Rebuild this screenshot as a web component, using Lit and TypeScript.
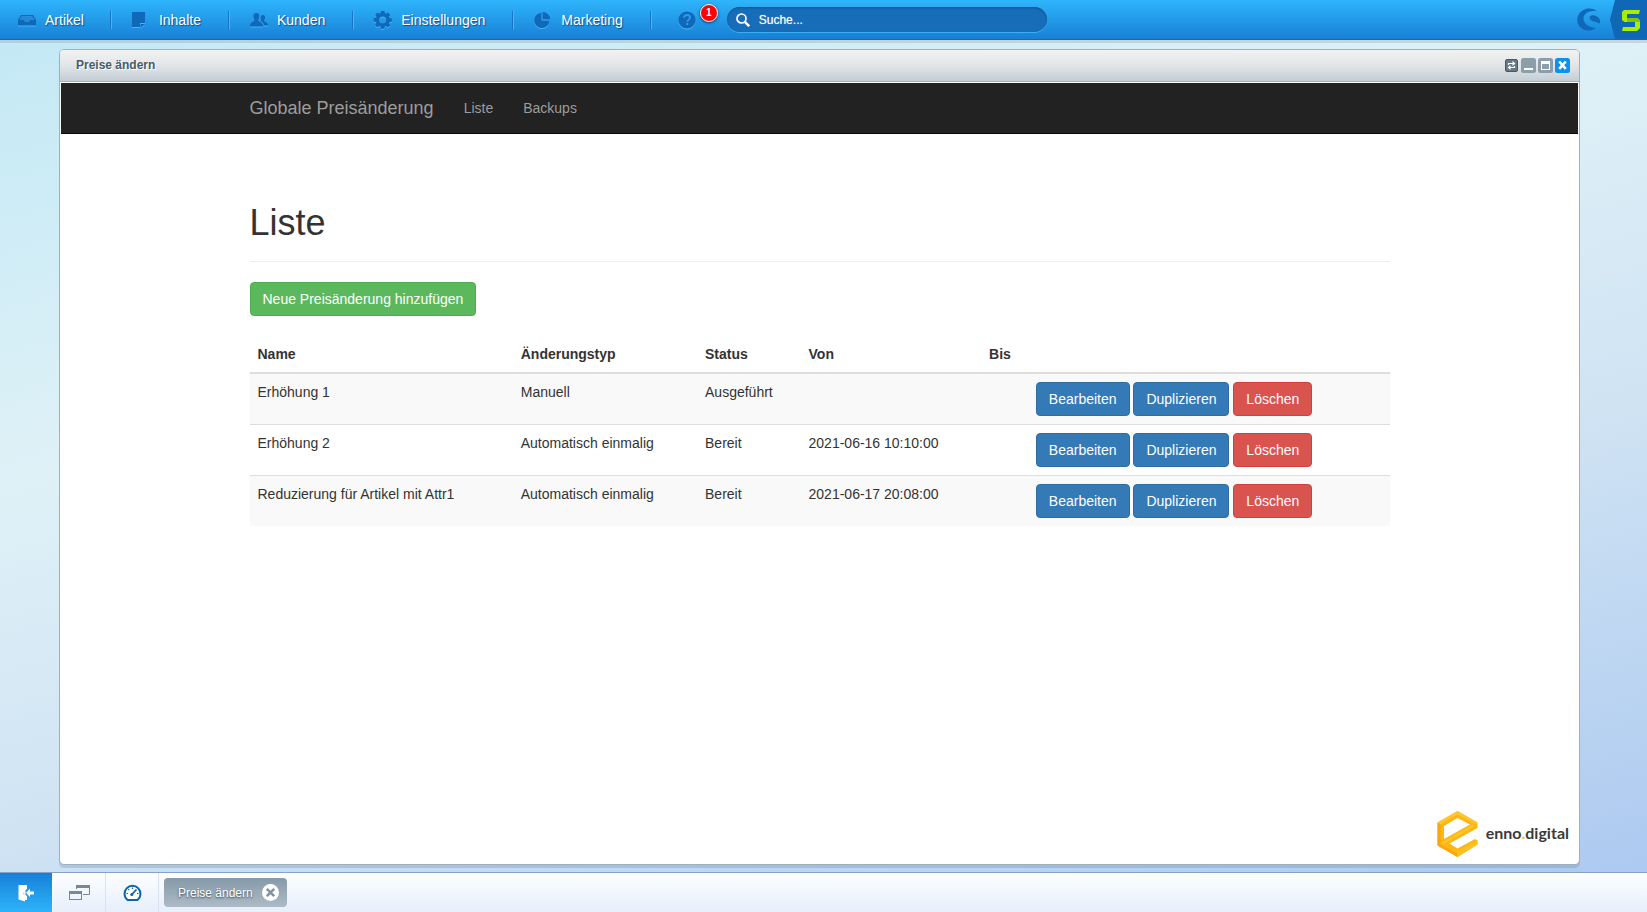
import { LitElement, html, css, svg } from "lit";
import { customElement } from "lit/decorators.js";

const navIcons = {
  artikel: svg`<path fill-rule="evenodd" d="M3 1H15L18 6V11.5H0V6ZM3.8 2.4L1.8 6H5.6L7 8H11L12.4 6H16.2L14.2 2.4Z"/><path d="M3.800 3H14.200L16 6H12.400L11 8H7L5.600 6H2Z" opacity=".45"/>`,
  inhalte: svg`<path d="M0 0H13V11H8V15H0ZM9 12H13L9 15.5Z"/>`,
  kunden: svg`<path d="M6.300 0C8.600 0 9.500 1.500 9.300 3.800C9.200 5.500 8.300 6.600 8.300 7.600C8.300 8.900 12.800 9.200 12.800 12.400V13.500H0V12.400C0 9.200 4.400 8.900 4.400 7.600C4.400 6.600 3.500 5.500 3.400 3.800C3.200 1.500 4.100 0 6.300 0ZM12.800 2C14.600 2 15.300 3.300 15.100 5C15 6.400 14.300 7.100 14.300 8C14.300 9 18 9.300 18 11.700V12.500H13.900C13.700 10.400 12.400 9.300 10.700 8.600C11.500 8 11 7 10.800 6C10.600 3.500 11 2 12.800 2Z"/>`,
  einstellungen: svg`<path fill-rule="evenodd" d="M7 0H10.400L10.900 2.300L12 2.800L14 1.500L16.300 3.900L15 5.900L15.400 7L17.800 7.500V10.700L15.400 11.200L14.900 12.200L16.200 14.200L13.900 16.400L11.900 15.100L10.900 15.500L10.300 17.800H7L6.500 15.500L5.400 15.100L3.400 16.300L1.100 14L2.400 12L2 11L-.3 10.500V7.200L2 6.700L2.500 5.700L1.200 3.700L3.500 1.400L5.500 2.700L6.500 2.300ZM8.700 5.400A3.500 3.500 0 1 0 8.700 12.400A3.500 3.500 0 1 0 8.700 5.400Z"/>`,
  marketing: svg`<path d="M7.400 .8V8.800H15.400A7.600 7.600 0 1 1 7.400 .8ZM8.600 0A7.500 7.500 0 0 1 16.200 7.600H8.600Z"/>`,
};

const navEntries = [
  { label: "Artikel", icon: navIcons.artikel, height: 12 },
  { label: "Inhalte", icon: navIcons.inhalte, height: 16 },
  { label: "Kunden", icon: navIcons.kunden, height: 14 },
  { label: "Einstellungen", icon: navIcons.einstellungen, height: 18 },
  { label: "Marketing", icon: navIcons.marketing, height: 16 },
];

const rows = [
  { name: "Erhöhung 1", type: "Manuell", status: "Ausgeführt", from: "", to: "" },
  { name: "Erhöhung 2", type: "Automatisch einmalig", status: "Bereit", from: "2021-06-16 10:10:00", to: "" },
  { name: "Reduzierung für Artikel mit Attr1", type: "Automatisch einmalig", status: "Bereit", from: "2021-06-17 20:08:00", to: "" },
];

@customElement("main-menu")
class MainMenu extends LitElement {
  static styles = css`
    :host {
      display: flex;
      align-items: stretch;
      height: 39px;
      border-bottom: 1px solid #0f6cbb;
      background: linear-gradient(#2fb5fb, #1780d6);
      box-shadow: 0 3px 0 rgba(120, 140, 150, 0.25);
      position: relative;
      font: 14px/20px "Liberation Sans", Arial, sans-serif;
      color: #fff;
    }
    svg { display: block; }
    .nav { display: flex; align-items: center; }
    .entry {
      display: flex;
      align-items: center;
      gap: 9px;
      padding: 0 27px 0 20px;
      color: #fff;
      text-decoration: none;
      text-shadow: 1px 1px 1px #0b4f8f;
    }
    .entry:first-child { padding: 0 26px 0 18px; }
    .glyph {
      width: 18px;
      overflow: visible;
      fill: #0f68b8;
      filter: drop-shadow(0 1px 0 #45b4f7);
    }
    .divider {
      width: 1px;
      height: 18px;
      background: #1874c4;
      border-right: 1px solid #4ab4f3;
    }
    .help {
      position: relative;
      margin: 0 31px 0 26px;
      padding: 0;
      border: 0;
      background: none;
      align-self: center;
    }
    .badge {
      position: absolute;
      left: 22px;
      top: -7px;
      box-sizing: border-box;
      width: 18px;
      height: 18px;
      border: 1px solid #fff;
      border-radius: 9px;
      background: #f00;
      box-shadow: 0 1px 3px #0a3c70;
      color: #fff;
      font: bold 10px/16px "Liberation Sans", Arial, sans-serif;
      text-align: center;
    }
    .search {
      box-sizing: border-box;
      display: flex;
      align-items: center;
      gap: 9px;
      width: 320px;
      height: 25px;
      margin-top: 7px;
      padding: 0 16px 0 9px;
      border-radius: 13px;
      background: #186db8;
      box-shadow: inset 0 1px 2px #0d5292, 0 1px 0 #3cacf4;
    }
    .query {
      flex: 1;
      min-width: 0;
      padding: 0;
      border: 0;
      outline: 0;
      background: none;
      color: #fff;
      font: 12px/20px "Liberation Sans", Arial, sans-serif;
      text-shadow: 0 0 1px rgba(255, 255, 255, 0.5);
    }
    .query::placeholder { color: #fff; opacity: 1; }
    .brand { display: flex; align-items: center; margin-left: auto; }
    .swirl { margin-right: 10px; overflow: visible; }
  `;

  render() {
    return html`
      <nav class="nav">
        ${navEntries.map(
          (entry) => html`
            <a class="entry" href="#">
              <svg class="glyph" height=${entry.height} viewBox="0 0 18 ${entry.height}" aria-hidden="true">${entry.icon}</svg>
              ${entry.label}
            </a>
            <span class="divider"></span>
          `
        )}
      </nav>
      <button class="help" aria-label="Hilfe">
        <svg class="glyph" height="18" viewBox="0 0 18 18" aria-hidden="true">
          <circle cx="9" cy="9" r="8.600" />
          <path d="M6 6.800C6.100 4.900 7.400 4 9.100 4C10.900 4 12.100 5 12.100 6.500C12.100 8.600 9.200 8.700 9.200 10.800" fill="none" stroke="#2b9be9" stroke-width="1.900" />
          <rect x="8.200" y="12" width="2" height="2" fill="#2b9be9" />
        </svg>
        <span class="badge">1</span>
      </button>
      <label class="search">
        <svg width="14" height="14" viewBox="0 0 14 14" fill="none" stroke="#fff" aria-hidden="true">
          <circle cx="5.500" cy="5.500" r="4.500" stroke-width="1.700" />
          <path d="M8.800 8.800L13.200 13.200" stroke-width="2.400" />
        </svg>
        <input class="query" type="text" placeholder="Suche..." aria-label="Suche" />
      </label>
      <div class="brand">
        <svg class="swirl" width="23" height="23" viewBox="0 0 23 23" aria-hidden="true">
          <path d="M20 3.200C17 .6 13 -.2 9.500 .8C3.800 2.300 .2 6.800 .3 12C.4 18.300 5.300 22.500 11.300 22.600C14.300 22.600 17.500 21.500 19 20C13 19.600 6.400 16.200 6.500 10.200C6.600 5.200 12.500 1.800 20 3.200Z" fill="#0f68b8" />
          <path d="M12.500 9.500C13 6.500 17.500 6.500 20.500 8.700C23 10.500 23.700 13 22.700 15.600C20 13.500 12 13.500 12.500 9.500Z" fill="#0f68b8" />
        </svg>
        <svg width="37" height="39" viewBox="0 0 37 39" aria-hidden="true">
          <path d="M5 0H37V39H5L0 19.500Z" fill="#0f67b6" />
          <path d="M14 10H30L29 14H17V18H27.500L30 20.500V28L27 31H12L13 27H25V22H14.500L12 20V12Z" fill="#a8ee00" />
          <path d="M17 18H27.500L30 20.500V22L25 22H17Z" fill="#82c400" />
        </svg>
      </div>
    `;
  }
}

@customElement("price-list")
class PriceList extends LitElement {
  static styles = css`
    :host {
      display: block;
      font: 14px/20px "Liberation Sans", Arial, sans-serif;
      color: #333;
    }
    .navbar { background: #222; border-bottom: 1px solid #080808; }
    .container {
      box-sizing: border-box;
      max-width: 1170px;
      margin: 0 auto;
      padding: 0 15px;
    }
    .links { display: flex; align-items: center; height: 50px; gap: 30px; }
    .brand { font-size: 18px; }
    .brand, .link { color: #9d9d9d; text-decoration: none; }
    .heading {
      margin: 69px 0 20px;
      padding-bottom: 18px;
      border-bottom: 1px solid #eee;
      font-weight: 500;
      font-size: 36px;
      line-height: 40px;
    }
    .btn {
      padding: 6px 12px;
      border: 1px solid #2e6da4;
      border-radius: 4px;
      background: #337ab7;
      color: #fff;
      font: inherit;
      cursor: pointer;
    }
    .success { background: #5cb85c; border-color: #4cae4c; }
    .danger { background: #d9534f; border-color: #d43f3a; }
    .table {
      width: 100%;
      margin-top: 20px;
      border-collapse: collapse;
    }
    .head, .cell { padding: 8px; text-align: left; vertical-align: top; }
    .head { border-bottom: 2px solid #ddd; }
    .cell { border-top: 1px solid #ddd; }
    .row:nth-child(odd) { background: #f9f9f9; }
  `;

  render() {
    return html`
      <nav class="navbar">
        <div class="container links">
          <a class="brand" href="#">Globale Preisänderung</a>
          <a class="link" href="#">Liste</a>
          <a class="link" href="#">Backups</a>
        </div>
      </nav>
      <div class="container">
        <h1 class="heading">Liste</h1>
        <button class="btn success">Neue Preisänderung hinzufügen</button>
        <table class="table">
          <thead>
            <tr>
              <th class="head">Name</th>
              <th class="head">Änderungstyp</th>
              <th class="head">Status</th>
              <th class="head">Von</th>
              <th class="head">Bis</th>
              <th class="head"></th>
            </tr>
          </thead>
          <tbody>
            ${rows.map(
              (row) => html`
                <tr class="row">
                  <td class="cell">${row.name}</td>
                  <td class="cell">${row.type}</td>
                  <td class="cell">${row.status}</td>
                  <td class="cell">${row.from}</td>
                  <td class="cell">${row.to}</td>
                  <td class="cell">
                    <button class="btn">Bearbeiten</button>
                    <button class="btn">Duplizieren</button>
                    <button class="btn danger">Löschen</button>
                  </td>
                </tr>
              `
            )}
          </tbody>
        </table>
      </div>
    `;
  }
}

@customElement("app-window")
class AppWindow extends LitElement {
  static styles = css`
    :host {
      display: flex;
      flex-direction: column;
      border: 1px solid #9db0bd;
      border-radius: 5px;
      background: #fff;
      box-shadow: 0 3px 0 rgba(110, 135, 165, 0.3);
      overflow: hidden;
      font: 12px/20px "Liberation Sans", Arial, sans-serif;
    }
    .titlebar {
      display: flex;
      align-items: center;
      gap: 2px;
      height: 31px;
      padding: 0 9px 0 16px;
      border-bottom: 1px solid #a3b3bd;
      background: linear-gradient(#f1f2f1, #e4e7e9 45%, #c4ced6);
    }
    .title {
      margin: 0 auto 1px 0;
      font-size: 12px;
      color: #475c6a;
      text-shadow: 1px 1px 0 #fff;
    }
    .tool { display: block; padding: 0; border: 0; background: none; }
    .tool svg { display: block; }
    .body { flex: 1; padding: 1px 1px 0; }
    .footer { display: flex; justify-content: flex-end; padding: 0 10px 7px; }
  `;

  render() {
    return html`
      <header class="titlebar">
        <h2 class="title">Preise ändern</h2>
        <button class="tool" aria-label="Aktualisieren">
          <svg width="15" height="15" viewBox="0 0 15 15">
            <rect x="1.500" y="1.500" width="12" height="12" rx="1.500" fill="#667786" stroke="#495968" />
            <path d="M4.500 7V5.500H9M10.500 8V9.500H6" fill="none" stroke="#fff" stroke-width="1.200" />
            <path d="M8.500 3L11.500 5.500L8.500 8ZM6.500 7L3.500 9.500L6.500 12Z" fill="#fff" />
          </svg>
        </button>
        <button class="tool" aria-label="Minimieren">
          <svg width="15" height="15" viewBox="0 0 15 15">
            <rect width="15" height="15" rx="2.500" fill="#8b9eaa" />
            <rect x="3" y="10" width="9" height="2" fill="#fff" />
          </svg>
        </button>
        <button class="tool" aria-label="Maximieren">
          <svg width="15" height="15" viewBox="0 0 15 15">
            <rect width="15" height="15" rx="2.500" fill="#8b9eaa" />
            <path fill-rule="evenodd" d="M3 3H12V12H3ZM4 6V11H11V6Z" fill="#fff" />
          </svg>
        </button>
        <button class="tool" aria-label="Schließen">
          <svg width="15" height="15" viewBox="0 0 15 15">
            <rect width="15" height="15" rx="2.500" fill="#0c93e9" />
            <path d="M4.200 3.500L10.800 10.800M10.800 3.500L4.200 10.800" stroke="#fff" stroke-width="2.600" />
          </svg>
        </button>
      </header>
      <div class="body"><slot></slot></div>
      <footer class="footer"><slot name="footer"></slot></footer>
    `;
  }
}

@customElement("enno-logo")
class EnnoLogo extends LitElement {
  static styles = css`
    :host {
      display: flex;
      align-items: center;
      gap: 8px;
      font: bold 16px/24px Lato, "Noto Sans", sans-serif;
      color: #3a3a3a;
    }
    .name { margin-bottom: 2px; }
    .dot { color: #fdb913; }
  `;

  render() {
    return html`
      <svg width="41" height="46" viewBox="0 0 41 46" aria-hidden="true">
        <path fill-rule="evenodd" d="M20.500 0L40.500 11.500V17L12.500 32.500L20.500 37.500L38 28L40.500 29.500V33.500L20.500 46L.5 34.500V11.500ZM20.500 7L7 15V28L33 13.500Z" fill="#fdb714" />
        <path d="M20.500 0L40.500 11.500L38 13L20.500 3.500L3 13.500L.5 11.500ZM4 32L36 13.500L38 15L6.500 33Z" fill="#ffc52c" />
        <path d="M.5 11.500L3.500 13.500V33.500L20.500 43V46L.5 34.500Z" fill="#ffa40a" />
        <path d="M20.500 40.500L40.500 29.500V33.500L20.500 46Z" fill="#ffc021" />
      </svg>
      <span class="name">enno<span class="dot">.</span>digital</span>
    `;
  }
}

@customElement("task-bar")
class TaskBar extends LitElement {
  static styles = css`
    :host {
      display: flex;
      height: 39px;
      border-top: 1px solid #83a3cd;
      background: linear-gradient(#fdfeff, #e7effb);
      font: 12px/20px "Liberation Sans", Arial, sans-serif;
    }
    .slot {
      box-sizing: content-box;
      display: grid;
      place-items: center;
      width: 52px;
      padding: 0;
      border: 0;
      border-right: 1px solid #d9e2f0;
      background: none;
    }
    .start {
      border-right-color: #fff;
      background: linear-gradient(#1680d8, #2eb3fa);
    }
    .task {
      display: flex;
      align-items: center;
      gap: 9px;
      align-self: flex-start;
      height: 29px;
      margin: 5px;
      padding: 0 8px 0 14px;
      border: 0;
      border-radius: 4px;
      background: linear-gradient(#8599a8, #adbbc7);
      color: #fff;
      font: inherit;
      text-shadow: 0 1px 2px #34434e;
    }
  `;

  render() {
    return html`
      <button class="slot start" aria-label="Abmelden">
        <svg width="18" height="18" viewBox="0 0 18 18" fill="#fff" aria-hidden="true">
          <path d="M1.500 1H10V5L8.500 6V11L10 12V16H8V17.500L1.500 15.500Z" />
          <path d="M9 8.800L13 4.500V7.500H17V10.500H13V13Z" />
          <path d="M6.800 8.500V10.500" stroke="#93c9f2" />
        </svg>
      </button>
      <button class="slot" aria-label="Fenster">
        <svg width="21" height="16" viewBox="0 0 21 16" fill="none" stroke="#778896" aria-hidden="true">
          <path d="M7.500 4V.5H20.500V9.500H14" />
          <path d="M7 1.500H21" stroke-width="3" />
          <rect x=".5" y="6.500" width="12" height="8" />
          <path d="M0 7.500H13" stroke-width="3" />
        </svg>
      </button>
      <button class="slot" aria-label="Leistung">
        <svg width="19" height="18" viewBox="0 0 19 18" fill="none" stroke="#0a66b0" aria-hidden="true">
          <path d="M4.500 16A8 8 0 1 1 14.500 16Z" fill="#fff" stroke-width="2" stroke-linejoin="round" />
          <path d="M3.500 9.500H5M5.200 5.200L6.200 6.200M9.500 3.500V5M14 9.500H15.500" stroke-width="1.200" />
          <path d="M8.300 11L13.500 5.500" stroke-width="1.800" />
          <circle cx="8.800" cy="10.500" r="1.500" fill="#0a66b0" stroke="none" />
        </svg>
      </button>
      <button class="task">
        Preise ändern
        <svg width="17" height="17" viewBox="0 0 17 17" aria-hidden="true">
          <circle cx="8.500" cy="8.500" r="8.500" fill="#fff" />
          <path d="M4.800 4.800L12.200 12.200M12.200 4.800L4.800 12.200" stroke="#8194a3" stroke-width="2.600" />
        </svg>
      </button>
    `;
  }
}

@customElement("app-root")
class AppRoot extends LitElement {
  static styles = css`
    :host {
      display: flex;
      flex-direction: column;
      min-height: 100vh;
      background: linear-gradient(165deg, #c1e8f5 0%, #dff1f7 36%, #cfe3f3 62%, #aac7f0 100%);
    }
    .desktop { flex: 1; display: flex; padding: 9px 67px 7px 59px; }
    .window { flex: 1; min-width: 0; }
  `;

  render() {
    return html`
      <main-menu></main-menu>
      <main class="desktop">
        <app-window class="window">
          <price-list></price-list>
          <enno-logo slot="footer"></enno-logo>
        </app-window>
      </main>
      <task-bar></task-bar>
    `;
  }
}
